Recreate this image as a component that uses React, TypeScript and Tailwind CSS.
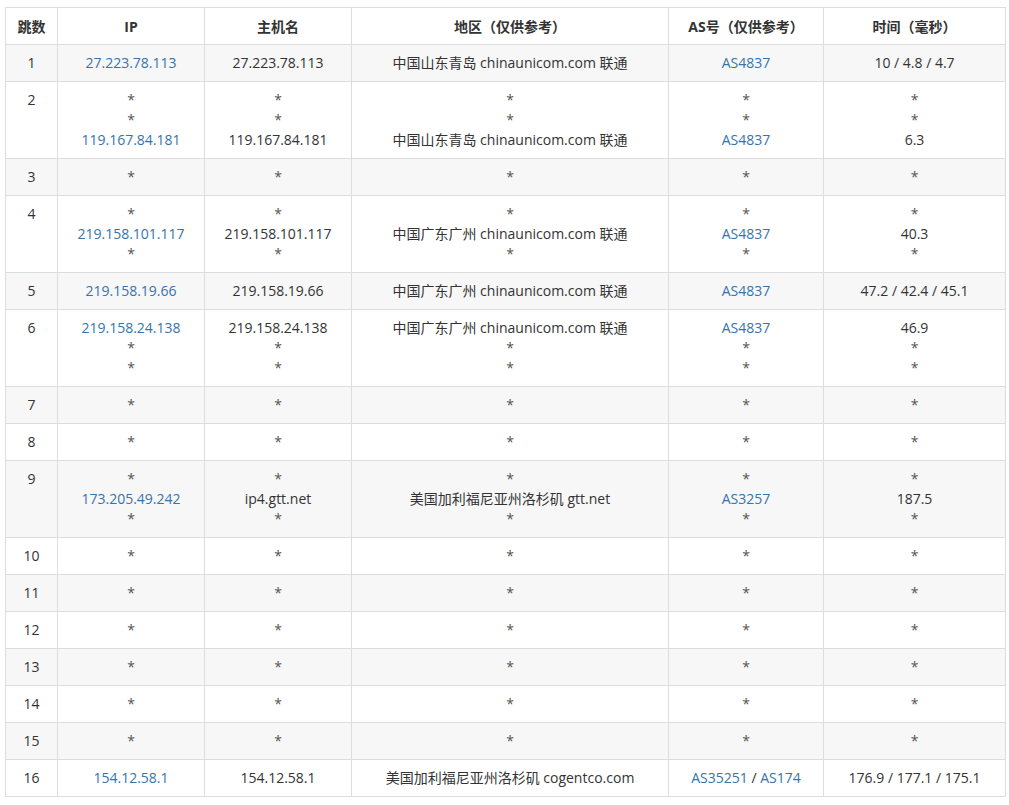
const A = "#3574ad";

type Cell = string[];
type Row = { n: number; ip: Cell; host: Cell; geo: Cell; as: Cell; t: Cell };

const s = (k: number) => Array(k).fill("*");

const rows: Row[] = [
  { n: 1, ip: ["27.223.78.113"], host: ["27.223.78.113"], geo: ["中国山东青岛 chinaunicom.com 联通"], as: ["AS4837"], t: ["10 / 4.8 / 4.7"] },
  { n: 2, ip: ["*", "*", "119.167.84.181"], host: ["*", "*", "119.167.84.181"], geo: ["*", "*", "中国山东青岛 chinaunicom.com 联通"], as: ["*", "*", "AS4837"], t: ["*", "*", "6.3"] },
  { n: 3, ip: s(1), host: s(1), geo: s(1), as: s(1), t: s(1) },
  { n: 4, ip: ["*", "219.158.101.117", "*"], host: ["*", "219.158.101.117", "*"], geo: ["*", "中国广东广州 chinaunicom.com 联通", "*"], as: ["*", "AS4837", "*"], t: ["*", "40.3", "*"] },
  { n: 5, ip: ["219.158.19.66"], host: ["219.158.19.66"], geo: ["中国广东广州 chinaunicom.com 联通"], as: ["AS4837"], t: ["47.2 / 42.4 / 45.1"] },
  { n: 6, ip: ["219.158.24.138", "*", "*"], host: ["219.158.24.138", "*", "*"], geo: ["中国广东广州 chinaunicom.com 联通", "*", "*"], as: ["AS4837", "*", "*"], t: ["46.9", "*", "*"] },
  { n: 7, ip: s(1), host: s(1), geo: s(1), as: s(1), t: s(1) },
  { n: 8, ip: s(1), host: s(1), geo: s(1), as: s(1), t: s(1) },
  { n: 9, ip: ["*", "173.205.49.242", "*"], host: ["*", "ip4.gtt.net", "*"], geo: ["*", "美国加利福尼亚州洛杉矶 gtt.net", "*"], as: ["*", "AS3257", "*"], t: ["*", "187.5", "*"] },
  ...[10, 11, 12, 13, 14, 15].map((n) => ({ n, ip: s(1), host: s(1), geo: s(1), as: s(1), t: s(1) })),
  { n: 16, ip: ["154.12.58.1"], host: ["154.12.58.1"], geo: ["美国加利福尼亚州洛杉矶 cogentco.com"], as: ["AS35251 / AS174"], t: ["176.9 / 177.1 / 175.1"] },
];

function Lines({ items, link }: { items: Cell; link?: boolean }) {
  return (
    <>
      {items.map((x, i) => (
        <div key={i} className="h-5 leading-5">
          {x === "*" ? (
            <span className="text-[#555]">*</span>
          ) : link && x.includes(" / ") ? (
            x.split(" / ").map((p, j) => (
              <span key={j}>
                {j > 0 && " / "}
                <span style={{ color: A }}>{p}</span>
              </span>
            ))
          ) : (
            <span style={link ? { color: A } : undefined}>{x}</span>
          )}
        </div>
      ))}
    </>
  );
}

export default function App() {
  const td = "border border-[#dddddd] pt-2 pb-[8px] align-top text-center";
  const th = "border border-[#dddddd] h-[37px] text-center font-bold";
  return (
    <div className="bg-white w-[1009px] h-[805px] pt-[7px] pl-[5px] text-[14px] text-[#333]" style={{ fontFamily: '"Open Sans","Noto Sans CJK SC",sans-serif' }}>
      <table className="border-collapse table-fixed w-[1000px]">
        <colgroup>
          <col className="w-[52px]" />
          <col className="w-[147px]" />
          <col className="w-[147px]" />
          <col className="w-[317px]" />
          <col className="w-[155px]" />
          <col className="w-[182px]" />
        </colgroup>
        <thead>
          <tr>
            <th className={th}>跳数</th>
            <th className={th}>IP</th>
            <th className={th}>主机名</th>
            <th className={th}>地区（仅供参考）</th>
            <th className={th}>AS号（仅供参考）</th>
            <th className={th}>时间（毫秒）</th>
          </tr>
        </thead>
        <tbody>
          {rows.map((r) => (
            <tr key={r.n} className={r.n % 2 ? "bg-[#f7f7f7]" : "bg-white"}>
              <td className={td}><div className="h-5 leading-5">{r.n}</div></td>
              <td className={td}><Lines items={r.ip} link /></td>
              <td className={td}><Lines items={r.host} /></td>
              <td className={td}><Lines items={r.geo} /></td>
              <td className={td}><Lines items={r.as} link /></td>
              <td className={td}><Lines items={r.t} /></td>
            </tr>
          ))}
        </tbody>
      </table>
    </div>
  );
}
